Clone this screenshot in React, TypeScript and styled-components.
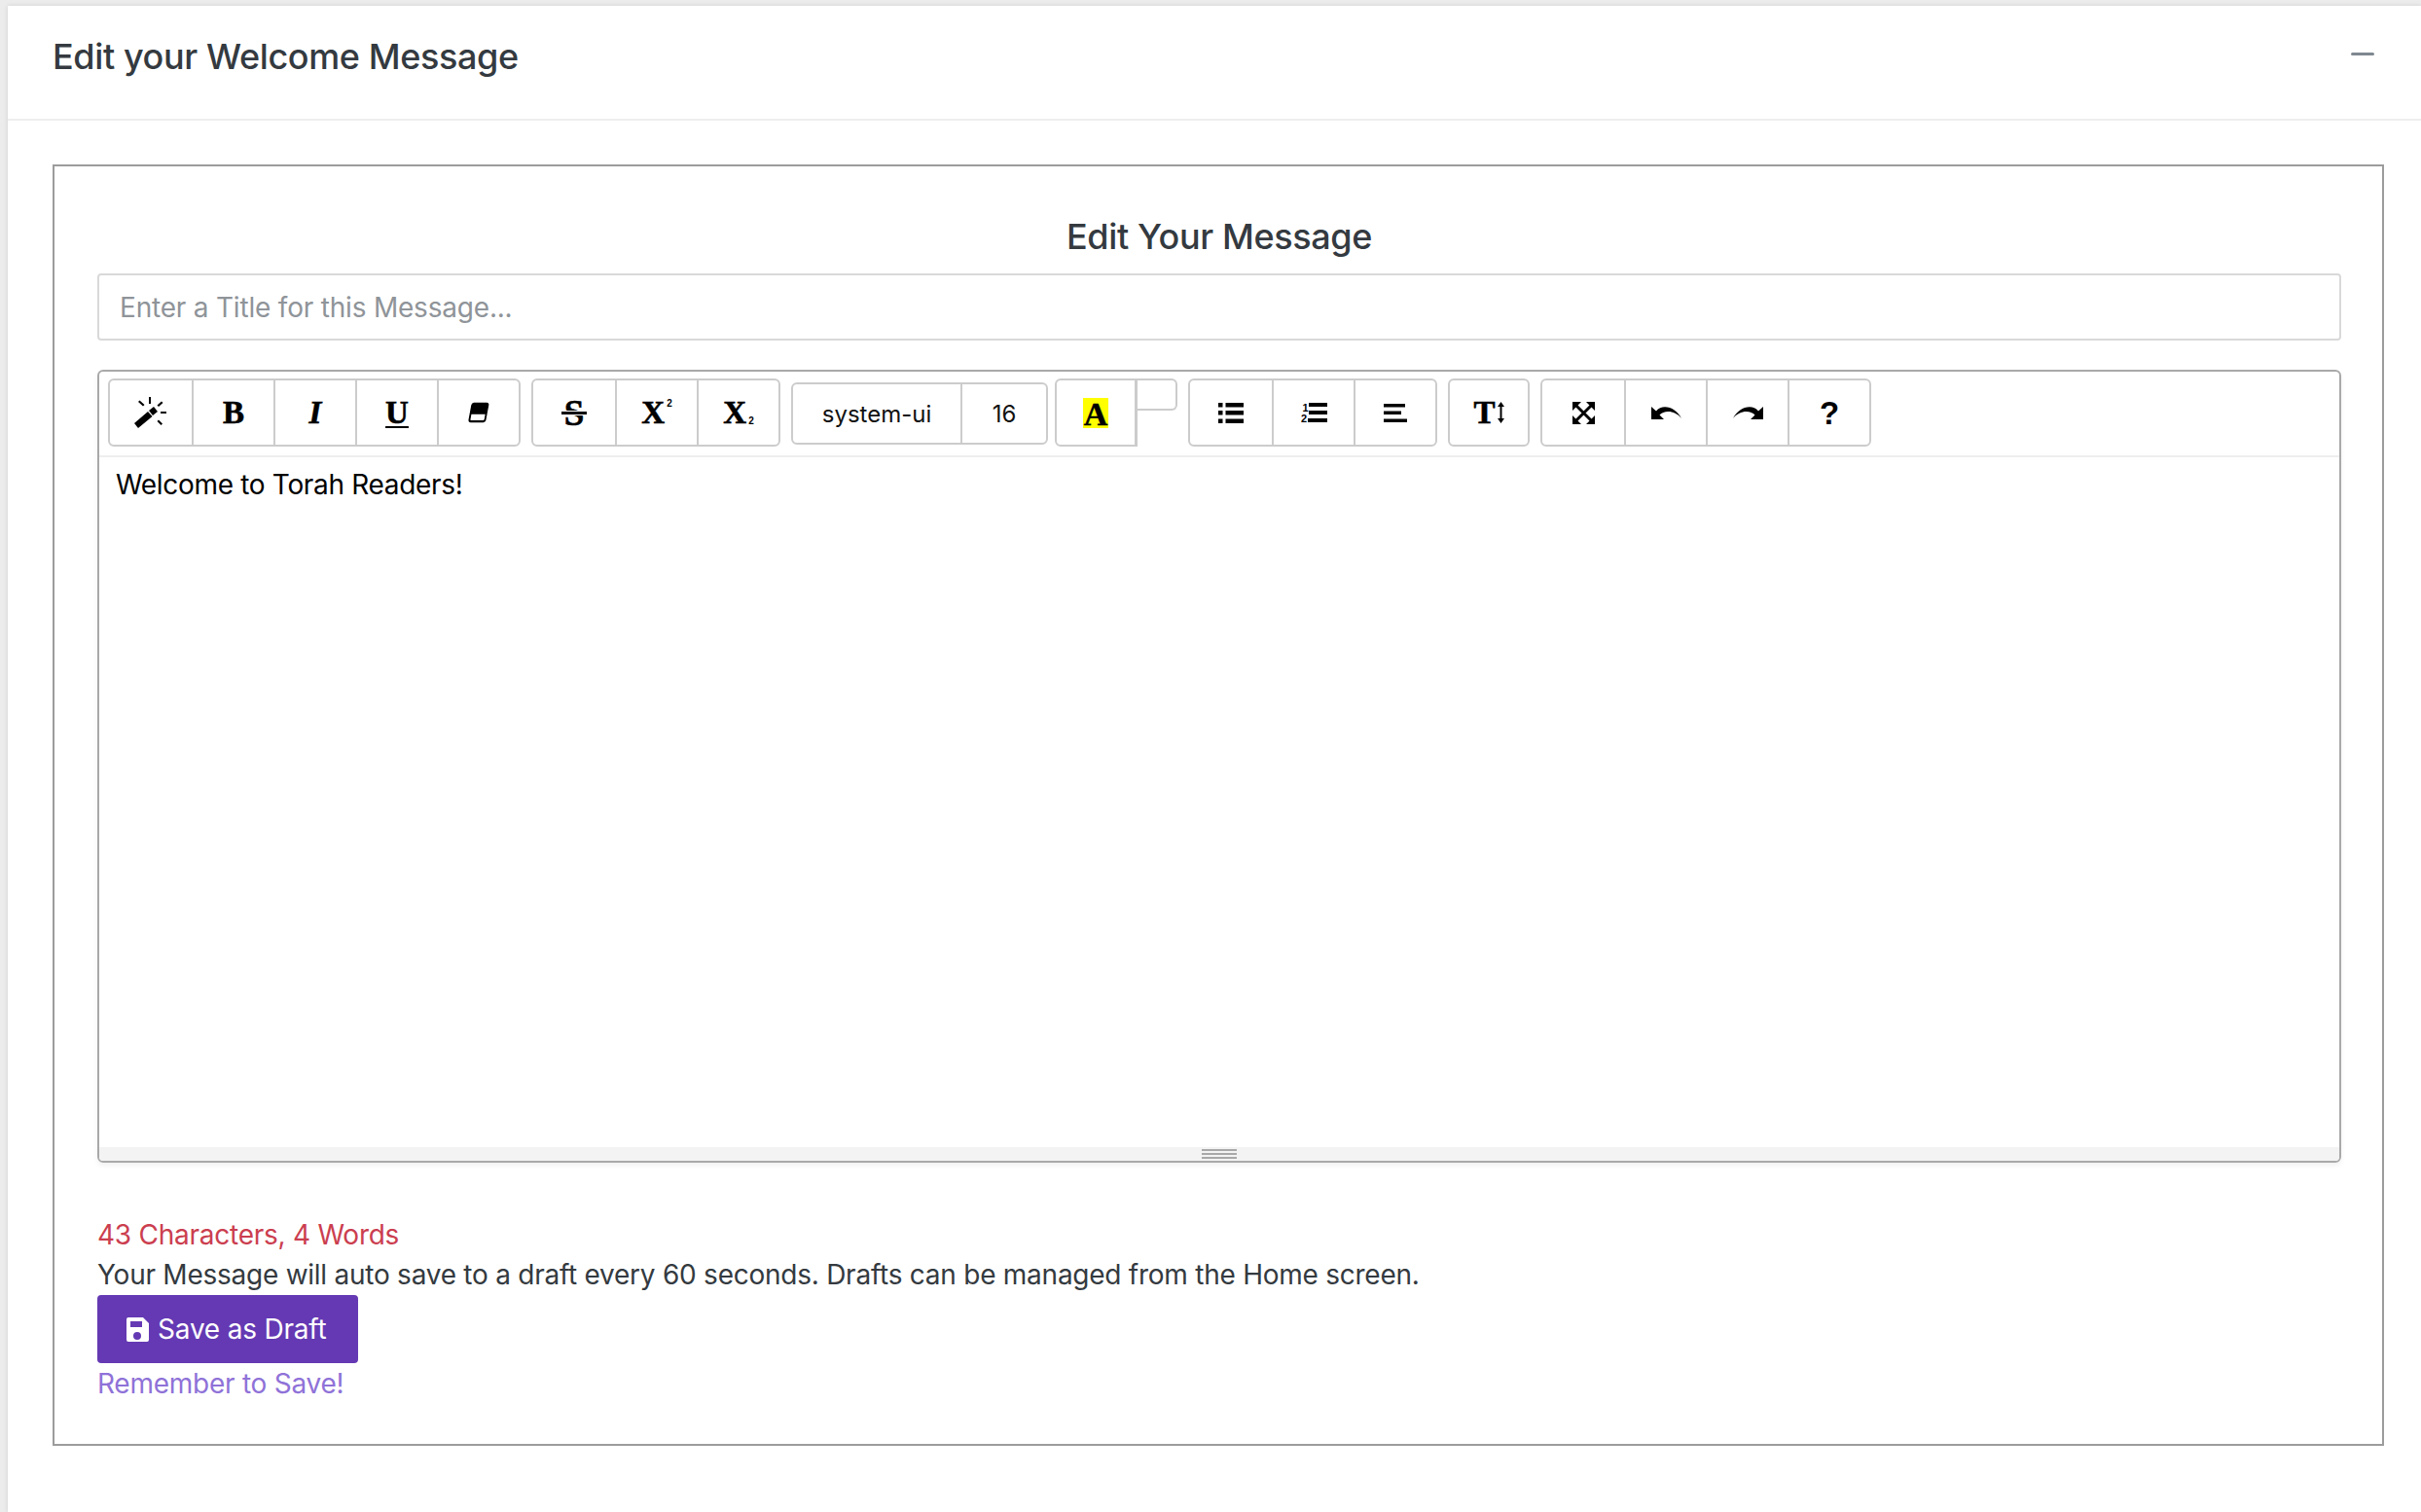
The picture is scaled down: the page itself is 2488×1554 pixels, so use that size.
import * as React from "react";
import styled, { createGlobalStyle } from "styled-components";

const GlobalStyle = createGlobalStyle`
  html, body {
    margin: 0;
    padding: 0;
    background: #ffffff;
  }
  body {
    font-family: Inter, "Noto Sans", sans-serif;
    color: #343a40;
  }
`;

const Page = styled("div")`
  height: 1554px;
  padding: 6px 0 0 8px;
  box-sizing: border-box;
  overflow: hidden;
  background: #ececec;
`;

const Card = styled("section")`
  height: 100%;
  background: #ffffff;
  box-shadow: 0 0 5px rgba(0, 0, 0, 0.12);
`;

const CardHeader = styled("header")`
  height: 118px;
  box-sizing: border-box;
  padding: 0 48px 12px 46px;
  display: flex;
  align-items: center;
  justify-content: space-between;
  border-bottom: 2px solid #eeeeee;
`;

const CardTitle = styled("h1")`
  margin: 0;
  font-size: 36px;
  font-weight: 500;
  letter-spacing: -0.38px;
  color: #343a40;
`;

const Collapse = styled("span")`
  display: block;
  width: 24px;
  height: 3px;
  margin-bottom: 6px;
  background: #7f8890;
  border-radius: 2px;
`;

const CardBody = styled("div")`
  padding: 45px 38px 0 46px;
`;

const OuterBox = styled("div")`
  height: 1317px;
  box-sizing: border-box;
  border: 2px solid #9c9c9c;
  padding: 49px 42px 0 44px;
`;

const BoxTitle = styled("h2")`
  margin: 0 0 15px;
  height: 46px;
  line-height: 46px;
  text-align: center;
  font-size: 36px;
  font-weight: 500;
  letter-spacing: -0.38px;
`;

const TitleInput = styled("input")`
  display: block;
  width: 100%;
  height: 69px;
  box-sizing: border-box;
  padding: 0 21px;
  border: 2px solid #d9d9d9;
  border-radius: 4px;
  outline: none;
  font-family: inherit;
  font-size: 28px;
  letter-spacing: -0.2px;
  color: #343a40;

  &::placeholder {
    color: #8f9499;
    opacity: 1;
  }
`;

const Editor = styled("div")`
  margin-top: 30px;
  height: 815px;
  box-sizing: border-box;
  display: flex;
  flex-direction: column;
  border: 2px solid #a9a9a9;
  border-radius: 6px;
  box-shadow: 0 3px 5px rgba(0, 0, 0, 0.06);
  overflow: hidden;
`;

const Toolbar = styled("div")`
  height: 88px;
  flex: none;
  box-sizing: border-box;
  padding: 7px 0 0 9px;
  display: flex;
  align-items: flex-start;
  gap: 11px;
  border-bottom: 2px solid #eeeeee;
`;

const BtnGroup = styled("div")`
  display: flex;
  height: 70px;
  box-sizing: border-box;
  border: 2px solid #cccccc;
  border-radius: 6px;
`;

const Btn = styled("div")<{ $wide?: boolean; $single?: boolean }>`
  width: ${({ $single }) => ($single ? "80px" : "84px")};
  height: 100%;
  display: flex;
  align-items: center;
  justify-content: center;
  box-sizing: border-box;
  color: #000000;

  & + & {
    border-left: ${({ $wide }) => ($wide ? "4px" : "2px")} solid #cccccc;
  }
`;

const Glyph = styled("span")<{ $italic?: boolean; $underline?: boolean; $sans?: boolean }>`
  font-family: ${({ $sans }) => ($sans ? '"Liberation Sans", sans-serif' : '"Liberation Serif", serif')};
  font-weight: 700;
  font-size: 33px;
  line-height: 1;
  -webkit-text-stroke: ${({ $sans }) => ($sans ? "0" : "0.6px")} #000000;
  font-style: ${({ $italic }) => ($italic ? "italic" : "normal")};
  text-decoration: ${({ $underline }) => ($underline ? "underline" : "none")};
  text-decoration-thickness: 2px;
  text-underline-offset: 3px;
`;

const StrikeGlyph = styled(Glyph)`
  position: relative;
  display: block;
  font-size: 37px;

  &::after {
    content: "";
    position: absolute;
    left: -3px;
    right: -3px;
    top: 17px;
    height: 3px;
    background: #000000;
    box-shadow: 0 -1px 0 #ffffff, 0 1px 0 #ffffff;
  }
`;

const ScriptIcon = styled("span")`
  display: inline-flex;
  height: 26px;
  align-items: center;
`;

const ScriptMark = styled("span")<{ $sub?: boolean }>`
  font-family: "Liberation Sans", sans-serif;
  font-weight: 700;
  font-size: 10px;
  line-height: 8px;
  align-self: ${({ $sub }) => ($sub ? "flex-end" : "flex-start")};
  margin-left: 2px;
`;

const HeightIcon = styled("span")`
  display: inline-flex;
  align-items: center;
  gap: 2px;
`;

const FontGroup = styled(BtnGroup)`
  height: 64px;
  margin-top: 4px;
`;

const FontCell = styled("div")<{ $w: number }>`
  width: ${({ $w }) => $w}px;
  display: flex;
  align-items: center;
  justify-content: center;
  font-size: 24px;
  color: #111111;

  & + & {
    border-left: 2px solid #cccccc;
  }
`;

const ColorGroup = styled("div")`
  display: flex;
  align-items: flex-start;
  margin-left: -4px;
`;

const ColorBtn = styled("div")`
  width: 85px;
  height: 70px;
  box-sizing: border-box;
  display: flex;
  align-items: center;
  justify-content: center;
  border: 2px solid #cccccc;
  border-right-width: 3px;
  border-radius: 6px 0 0 6px;
`;

const ColorSwatch = styled("span")`
  display: block;
  width: 26px;
  height: 31px;
  background: #ffff00;
  color: #000000;
  font-family: "Liberation Serif", serif;
  font-weight: 700;
  font-size: 34px;
  line-height: 34px;
  text-align: center;
  -webkit-text-stroke: 0.5px #000000;
`;

const ColorCaret = styled("div")`
  width: 41px;
  height: 33px;
  box-sizing: border-box;
  border: 2px solid #cccccc;
  border-left: none;
  border-radius: 0 6px 6px 0;
`;

const Content = styled("div")`
  flex: 1;
  padding: 8px 17px;
  font-size: 28px;
  line-height: 40px;
  letter-spacing: -0.32px;
  color: #000000;
`;

const Statusbar = styled("div")`
  height: 14px;
  flex: none;
  display: flex;
  flex-direction: column;
  align-items: center;
  justify-content: center;
  gap: 2px;
  background: #f3f3f3;
`;

const GripLine = styled("span")`
  display: block;
  width: 36px;
  height: 2px;
  background: #a9a9a9;
`;

const Footer = styled("div")`
  margin-top: 53px;
  font-size: 28px;
  line-height: 42px;
  letter-spacing: -0.25px;
`;

const CountLine = styled("div")`
  color: #cb3e4f;
`;

const InfoLine = styled("div")`
  color: #343a40;
  line-height: 41px;
`;

const SaveButton = styled("button")`
  display: flex;
  align-items: center;
  gap: 9px;
  width: 268px;
  height: 70px;
  padding: 0 0 0 29px;
  box-sizing: border-box;
  border: none;
  border-radius: 4px;
  background: #6439b3;
  color: #ffffff;
  font-family: inherit;
  font-size: 28px;
  letter-spacing: -0.2px;
`;

const RememberLine = styled("div")`
  color: #8f72d8;
`;

const Icon = styled("svg")`
  display: block;
  fill: currentColor;
`;

const FlippedIcon = styled(Icon)`
  transform: scaleX(-1);
`;

const WandIcon = () => (
  <Icon width="34" height="32" viewBox="0 0 34 32">
    <path d="M0 27L14 15l4.500 5L4 32z" />
    <path d="M15 14l5-4 4 5-5 4z" />
    <path d="M15 0h2v7h-2zM4 5l1.500-1.500 5 4.500-1.500 1.500zM28 4.500L29.500 6 25 10l-1.500-1.500zM27 15h6v2h-6zM23.500 25l1.500-1.500 4 4-1.500 1.500z" />
  </Icon>
);

const EraserIcon = () => (
  <Icon width="24" height="24" viewBox="0 0 26 26">
    <path d="M8 2h14c1.500 0 2.500 1.200 2.200 2.700l-3 16C21 22.500 19.700 24 18 24H4c-1.600 0-2.700-1.300-2.400-3l3-16C5 3.200 6.400 2 8 2zm-3.200 13l-1 5.500c-.1.800.3 1.300 1 1.300h12.800c.8 0 1.400-.6 1.600-1.400l1-5.400z" />
  </Icon>
);

const BulletsIcon = () => (
  <Icon width="26" height="21" viewBox="0 0 26 21">
    <path d="M0 0h4.500v4.500H0zM0 8h4.500v4.500H0zM0 16.500h4.500V21H0zM7.500 0H26v4.500H7.500zM7.500 8H26v4.500H7.500zM7.500 16.500H26V21H7.500z" />
  </Icon>
);

const NumbersIcon = () => (
  <Icon width="27" height="22" viewBox="0 0 27 22">
    <path d="M8 1h19v4H8zM8 9h19v4H8zM7 17h20v4H7z" />
    <text x="1.500" y="10" fontFamily="Liberation Sans" fontWeight="700" fontSize="11">1</text>
    <text x="0" y="21" fontFamily="Liberation Sans" fontWeight="700" fontSize="11">2</text>
  </Icon>
);

const AlignIcon = () => (
  <Icon width="24" height="19" viewBox="0 0 24 19">
    <path d="M0 0h22v3.500H0zM0 7.500h18V11H0zM0 15.500h24V19H0z" />
  </Icon>
);

const SizeArrow = () => (
  <Icon width="7" height="22" viewBox="0 0 7 22">
    <path d="M3.500 0L7 5H4.500v12H7l-3.500 5L0 17h2.500V5H0z" />
  </Icon>
);

const ExpandIcon = () => (
  <Icon width="23" height="23" viewBox="0 0 23 23">
    <path d="M0 0h9L0 9zM23 0v9L14 0zM0 23v-9l9 9zM23 23h-9l9-9z" />
    <path d="M3 3l17 17M20 3L3 20" stroke="#000000" strokeWidth="3" />
  </Icon>
);

const undoPath = "M0 1v13h13L8.500 9.500C13 4.500 24 4 31 13 26 2.500 12-3 5 5.500z";

const UndoIcon = () => (
  <Icon width="31" height="14" viewBox="0 0 31 14">
    <path d={undoPath} />
  </Icon>
);

const RedoIcon = () => (
  <FlippedIcon width="31" height="14" viewBox="0 0 31 14">
    <path d={undoPath} />
  </FlippedIcon>
);

const FloppyIcon = () => (
  <Icon width="24" height="28" viewBox="0 0 24 28">
    <path d="M3 2h15l6 6v17a2 2 0 0 1-2 2H3a2 2 0 0 1-2-2V4a2 2 0 0 1 2-2zm2 4v6h12V6zm7 11a4 4 0 1 0 0 8 4 4 0 0 0 0-8z" fillRule="evenodd" />
  </Icon>
);

export default class App extends React.Component {
  render(): JSX.Element {
    return (
      <Page>
        <GlobalStyle />
        <Card>
          <CardHeader>
            <CardTitle>Edit your Welcome Message</CardTitle>
            <Collapse />
          </CardHeader>
          <CardBody>
            <OuterBox>
              <BoxTitle>Edit Your Message</BoxTitle>
              <TitleInput placeholder="Enter a Title for this Message..." readOnly />
              <Editor>
                <Toolbar>
                  <BtnGroup>
                    <Btn><WandIcon /></Btn>
                    <Btn $wide><Glyph>B</Glyph></Btn>
                    <Btn><Glyph $italic>I</Glyph></Btn>
                    <Btn $wide><Glyph $underline>U</Glyph></Btn>
                    <Btn><EraserIcon /></Btn>
                  </BtnGroup>
                  <BtnGroup>
                    <Btn><StrikeGlyph>S</StrikeGlyph></Btn>
                    <Btn>
                      <ScriptIcon><Glyph>X</Glyph><ScriptMark>2</ScriptMark></ScriptIcon>
                    </Btn>
                    <Btn>
                      <ScriptIcon><Glyph>X</Glyph><ScriptMark $sub>2</ScriptMark></ScriptIcon>
                    </Btn>
                  </BtnGroup>
                  <FontGroup>
                    <FontCell $w={172}>system-ui</FontCell>
                    <FontCell $w={86}>16</FontCell>
                  </FontGroup>
                  <ColorGroup>
                    <ColorBtn><ColorSwatch>A</ColorSwatch></ColorBtn>
                    <ColorCaret />
                  </ColorGroup>
                  <BtnGroup>
                    <Btn><BulletsIcon /></Btn>
                    <Btn><NumbersIcon /></Btn>
                    <Btn><AlignIcon /></Btn>
                  </BtnGroup>
                  <BtnGroup>
                    <Btn $single>
                      <HeightIcon><Glyph>T</Glyph><SizeArrow /></HeightIcon>
                    </Btn>
                  </BtnGroup>
                  <BtnGroup>
                    <Btn><ExpandIcon /></Btn>
                    <Btn><UndoIcon /></Btn>
                    <Btn><RedoIcon /></Btn>
                    <Btn><Glyph $sans>?</Glyph></Btn>
                  </BtnGroup>
                </Toolbar>
                <Content>Welcome to Torah Readers!</Content>
                <Statusbar>
                  <GripLine />
                  <GripLine />
                  <GripLine />
                </Statusbar>
              </Editor>
              <Footer>
                <CountLine>43 Characters, 4 Words</CountLine>
                <InfoLine>Your Message will auto save to a draft every 60 seconds. Drafts can be managed from the Home screen.</InfoLine>
                <SaveButton><FloppyIcon />Save as Draft</SaveButton>
                <RememberLine>Remember to Save!</RememberLine>
              </Footer>
            </OuterBox>
          </CardBody>
        </Card>
      </Page>
    );
  }
}
